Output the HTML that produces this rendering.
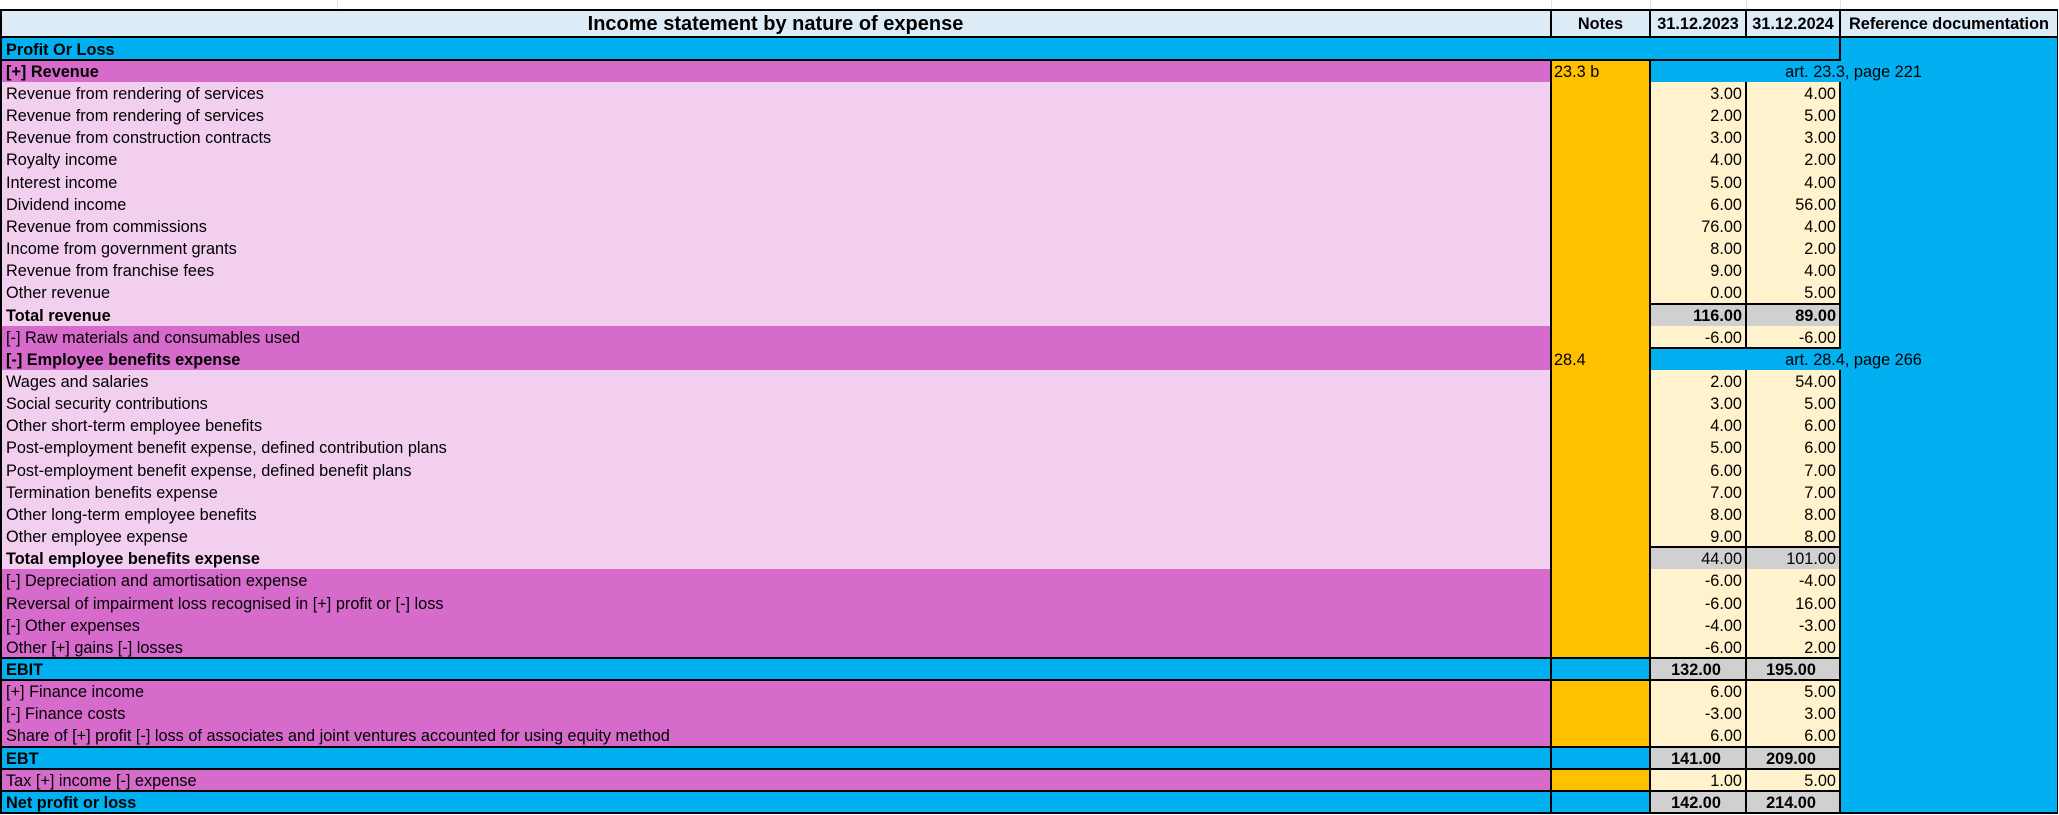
<!DOCTYPE html>
<html><head><meta charset="utf-8">
<style>
*{margin:0;padding:0;box-sizing:border-box}
body{width:2059px;height:814px;position:relative;background:#fff;font-family:"Liberation Sans",Arial,sans-serif;font-size:16.3px;color:#000;overflow:hidden}
div{position:absolute}
.row{left:0;width:1840px;height:23px}
.row div{top:0;height:23px;line-height:24px;white-space:nowrap;overflow:visible}
.l{left:2px;width:1549px;padding-left:4px}
.n{left:1551px;width:99px;padding-left:3px}
.a{left:1650px;width:96px;text-align:right;padding-right:4px;background:#FFF2CC}
.b{left:1746px;width:94px;text-align:right;padding-right:4px;background:#FFF2CC}
.m{background:#D66BCB}
.p{background:#F2CEEF}
.c{background:#00B0F0}
.o{background:#FFC000}
.g{background:#D0D0D0 !important}
.bd{font-weight:bold}
.art{left:1650px !important;width:407px;text-align:center;background:#00B0F0}
.k{background:#000}
.v{width:2px}
.h{height:2px}
</style></head><body>
<div style="left:337px;top:0;width:1px;height:10px;background:#e3e3e3"></div>
<div style="left:1551px;top:0;width:1px;height:10px;background:#e3e3e3"></div>
<div style="left:1650px;top:0;width:1px;height:10px;background:#e3e3e3"></div>
<div style="left:1746px;top:0;width:1px;height:10px;background:#e3e3e3"></div>
<div style="left:1840px;top:0;width:1px;height:10px;background:#e3e3e3"></div>
<div style="left:0;top:10px;width:2058px;height:28px;background:#DDEBF7"></div>
<div style="left:0;top:10px;width:1551px;height:28px;line-height:29px;text-align:center;font-weight:bold;font-size:20px">Income statement by nature of expense</div>
<div style="left:1551px;top:10px;width:99px;height:28px;line-height:29px;text-align:center;font-weight:bold">Notes</div>
<div style="left:1650px;top:10px;width:96px;height:28px;line-height:29px;text-align:center;font-weight:bold">31.12.2023</div>
<div style="left:1746px;top:10px;width:94px;height:28px;line-height:29px;text-align:center;font-weight:bold">31.12.2024</div>
<div style="left:1841px;top:10px;width:216px;height:28px;line-height:29px;text-align:center;font-weight:bold">Reference documentation</div>
<div style="left:1840px;top:38px;width:217px;height:775px;background:#00B0F0"></div>
<div style="left:0;top:38px;width:1840px;height:22px;background:#00B0F0"></div>
<div style="left:6px;top:38px;height:22px;line-height:24px;font-weight:bold">Profit Or Loss</div>

<div class="row" style="top:60px"><div class="l m bd">[+] Revenue</div><div class="n o">23.3 b</div><div class="art">art. 23.3, page 221</div></div>
<div class="row" style="top:82px"><div class="l p">Revenue from rendering of services</div><div class="n o"></div><div class="a">3.00</div><div class="b">4.00</div></div>
<div class="row" style="top:104px"><div class="l p">Revenue from rendering of services</div><div class="n o"></div><div class="a">2.00</div><div class="b">5.00</div></div>
<div class="row" style="top:126px"><div class="l p">Revenue from construction contracts</div><div class="n o"></div><div class="a">3.00</div><div class="b">3.00</div></div>
<div class="row" style="top:148px"><div class="l p">Royalty income</div><div class="n o"></div><div class="a">4.00</div><div class="b">2.00</div></div>
<div class="row" style="top:171px"><div class="l p">Interest income</div><div class="n o"></div><div class="a">5.00</div><div class="b">4.00</div></div>
<div class="row" style="top:193px"><div class="l p">Dividend income</div><div class="n o"></div><div class="a">6.00</div><div class="b">56.00</div></div>
<div class="row" style="top:215px"><div class="l p">Revenue from commissions</div><div class="n o"></div><div class="a">76.00</div><div class="b">4.00</div></div>
<div class="row" style="top:237px"><div class="l p">Income from government grants</div><div class="n o"></div><div class="a">8.00</div><div class="b">2.00</div></div>
<div class="row" style="top:259px"><div class="l p">Revenue from franchise fees</div><div class="n o"></div><div class="a">9.00</div><div class="b">4.00</div></div>
<div class="row" style="top:281px"><div class="l p">Other revenue</div><div class="n o"></div><div class="a">0.00</div><div class="b">5.00</div></div>
<div class="row" style="top:304px"><div class="l p bd">Total revenue</div><div class="n o"></div><div class="a g bd">116.00</div><div class="b g bd">89.00</div></div>
<div class="row" style="top:326px"><div class="l m">[-] Raw materials and consumables used</div><div class="n o"></div><div class="a">-6.00</div><div class="b">-6.00</div></div>
<div class="row" style="top:348px"><div class="l m bd">[-] Employee benefits expense</div><div class="n o">28.4</div><div class="art">art. 28.4, page 266</div></div>
<div class="row" style="top:370px"><div class="l p">Wages and salaries</div><div class="n o"></div><div class="a">2.00</div><div class="b">54.00</div></div>
<div class="row" style="top:392px"><div class="l p">Social security contributions</div><div class="n o"></div><div class="a">3.00</div><div class="b">5.00</div></div>
<div class="row" style="top:414px"><div class="l p">Other short-term employee benefits</div><div class="n o"></div><div class="a">4.00</div><div class="b">6.00</div></div>
<div class="row" style="top:436px"><div class="l p">Post-employment benefit expense, defined contribution plans</div><div class="n o"></div><div class="a">5.00</div><div class="b">6.00</div></div>
<div class="row" style="top:459px"><div class="l p">Post-employment benefit expense, defined benefit plans</div><div class="n o"></div><div class="a">6.00</div><div class="b">7.00</div></div>
<div class="row" style="top:481px"><div class="l p">Termination benefits expense</div><div class="n o"></div><div class="a">7.00</div><div class="b">7.00</div></div>
<div class="row" style="top:503px"><div class="l p">Other long-term employee benefits</div><div class="n o"></div><div class="a">8.00</div><div class="b">8.00</div></div>
<div class="row" style="top:525px"><div class="l p">Other employee expense</div><div class="n o"></div><div class="a">9.00</div><div class="b">8.00</div></div>
<div class="row" style="top:547px"><div class="l p bd">Total employee benefits expense</div><div class="n o"></div><div class="a g">44.00</div><div class="b g">101.00</div></div>
<div class="row" style="top:569px"><div class="l m">[-] Depreciation and amortisation expense</div><div class="n o"></div><div class="a">-6.00</div><div class="b">-4.00</div></div>
<div class="row" style="top:592px"><div class="l m">Reversal of impairment loss recognised in [+] profit or [-] loss</div><div class="n o"></div><div class="a">-6.00</div><div class="b">16.00</div></div>
<div class="row" style="top:614px"><div class="l m">[-] Other expenses</div><div class="n o"></div><div class="a">-4.00</div><div class="b">-3.00</div></div>
<div class="row" style="top:636px"><div class="l m">Other [+] gains [-] losses</div><div class="n o"></div><div class="a">-6.00</div><div class="b">2.00</div></div>
<div class="row" style="top:658px"><div class="l c bd">EBIT</div><div class="n c"></div><div class="a g bd" style="text-align:center">132.00</div><div class="b g bd" style="text-align:center">195.00</div></div>
<div class="row" style="top:680px"><div class="l m">[+] Finance income</div><div class="n o"></div><div class="a">6.00</div><div class="b">5.00</div></div>
<div class="row" style="top:702px"><div class="l m">[-] Finance costs</div><div class="n o"></div><div class="a">-3.00</div><div class="b">3.00</div></div>
<div class="row" style="top:724px"><div class="l m">Share of [+] profit [-] loss of associates and joint ventures accounted for using equity method</div><div class="n o"></div><div class="a">6.00</div><div class="b">6.00</div></div>
<div class="row" style="top:747px"><div class="l c bd">EBT</div><div class="n c"></div><div class="a g bd" style="text-align:center">141.00</div><div class="b g bd" style="text-align:center">209.00</div></div>
<div class="row" style="top:769px"><div class="l m">Tax [+] income [-] expense</div><div class="n o"></div><div class="a">1.00</div><div class="b">5.00</div></div>
<div class="row" style="top:791px"><div class="l c bd">Net profit or loss</div><div class="n c"></div><div class="a g bd" style="text-align:center">142.00</div><div class="b g bd" style="text-align:center">214.00</div></div>

<div class="k v" style="left:0;top:10px;height:803px"></div>
<div class="k v" style="left:1550px;top:10px;height:28px"></div>
<div class="k v" style="left:1550px;top:60px;height:753px"></div>
<div class="k v" style="left:1649px;top:10px;height:28px"></div>
<div class="k v" style="left:1649px;top:60px;height:753px"></div>
<div class="k v" style="left:1745px;top:10px;height:28px"></div>
<div class="k v" style="left:1745px;top:82px;height:266px"></div>
<div class="k v" style="left:1745px;top:370px;height:443px"></div>
<div class="k v" style="left:1839px;top:10px;height:51px"></div>
<div class="k v" style="left:1839px;top:82px;height:266px"></div>
<div class="k v" style="left:1839px;top:370px;height:443px"></div>
<div class="k" style="left:2057px;top:10px;width:1px;height:803px"></div>
<div class="k h" style="left:0;top:9px;width:2058px"></div>
<div class="k h" style="left:0;top:36px;width:2058px"></div>
<div class="k h" style="left:0;top:59px;width:1841px"></div>
<div class="k h" style="left:1649px;top:303px;width:192px"></div>
<div class="k h" style="left:1649px;top:347px;width:192px"></div>
<div class="k h" style="left:1649px;top:546px;width:192px"></div>
<div class="k h" style="left:0;top:657px;width:1841px"></div>
<div class="k h" style="left:0;top:679px;width:1841px"></div>
<div class="k h" style="left:0;top:746px;width:1841px"></div>
<div class="k h" style="left:0;top:768px;width:1841px"></div>
<div class="k h" style="left:0;top:790px;width:1841px"></div>
<div class="k h" style="left:0;top:812px;width:2058px"></div>
</body></html>
